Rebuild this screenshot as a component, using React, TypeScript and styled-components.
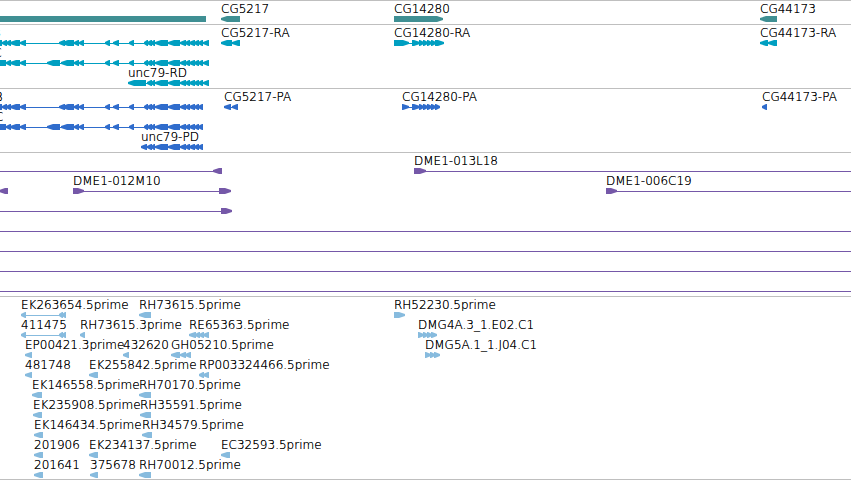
import React from "react";
import styled, { createGlobalStyle } from "styled-components";

const GlobalStyle = createGlobalStyle`
  body {
    margin: 0;
    background: #ffffff;
    color: #000000;
    font-family: "DejaVu Sans", sans-serif;
    font-size: 12px;
    font-weight: 200;
    line-height: 17px;
    overflow-x: hidden;
  }
`;

const Browser = styled.main`
  display: flex;
  flex-direction: column;
  overflow: hidden;
  border-bottom: 1px solid #bfbfbf;
`;

const Track = styled.section<{ $color: string }>`
  display: flex;
  flex-direction: column;
  padding-bottom: 3px;
  border-top: 1px solid #bfbfbf;
  color: ${(p) => p.$color};

  &:last-child {
    padding-bottom: 2px;
  }
`;

const Lane = styled.div`
  position: relative;
  display: flex;
  align-items: flex-end;
  height: 20px;
`;

const Glyphs = styled.svg`
  display: block;
  flex: 1;
  min-width: 0;
  height: 5px;
  overflow: visible;
  fill: currentColor;
`;

const Label = styled.span<{ $start: number }>`
  position: absolute;
  top: 0;
  left: ${(p) => p.$start}px;
  color: #000000;
  text-shadow: 0 0 0 #000000;
  white-space: nowrap;
`;

type Dir = "left" | "right" | "none";
type Span = [start: number, end: number | "edge"];

interface Feature {
  label?: string;
  at?: number;
  dir?: Dir;
  exons?: [number, number][];
  line?: Span;
}

interface TrackData {
  name: string;
  color: string;
  lanes: Feature[][];
}

function exonPath([a, b]: [number, number], dir: Dir): string {
  if (dir === "none") return `M${a} 0H${b}V6H${a}Z`;
  const head = Math.min(6, b - a - 1);
  const tip = dir === "left" ? a : b;
  const tail = dir === "left" ? b : a;
  const full = dir === "left" ? tip + head : tip - head;
  return `M${tip} 2L${full} 0H${tail}V6H${full}L${tip} 4Z`;
}

function Drawing({ feature }: { feature: Feature }) {
  const { line, exons = [], dir = "left" } = feature;
  return (
    <g>
      {line && (
        <line
          x1={line[0]}
          x2={line[1] === "edge" ? "100%" : line[1]}
          y1={3.5}
          y2={3.5}
          stroke="currentColor"
        />
      )}
      {exons.map((e) => (
        <path key={e[0]} d={exonPath(e, dir)} />
      ))}
    </g>
  );
}

const midExons: [number, number][] = [
  [74, 79], [79, 84], [105, 110], [113, 119], [129, 134],
];
const tailExons: [number, number][] = [
  [155, 168], [168, 180], [180, 186], [185, 190], [189, 195], [194, 199], [198, 203],
];
const clusterExons: [number, number][] = [[144, 148], [147, 152], [151, 155]];
const formB: [number, number][] = [
  [-6, 2], [2, 7], [6, 11], [10, 20], [20, 26], [59, 65], [62, 74],
  ...midExons, ...clusterExons, ...tailExons,
];
const formC: [number, number][] = [
  [-8, 6], [6, 11], [10, 20], [20, 26], [47, 60], [61, 74],
  ...midExons, ...clusterExons, ...tailExons,
];

const utr: [number, number] = [203, 209];

const single = (label: string, at: number, end: number, dir: Dir = "left"): Feature => ({
  label, at, dir, exons: [[at, end]],
});

const backbone: Feature = { line: [0, "edge"] };

const tracks: TrackData[] = [
  {
    name: "Genes",
    color: "#3f8f93",
    lanes: [
      [
        { dir: "none", exons: [[-4, 206]] },
        single("CG5217", 221, 240),
        single("CG14280", 394, 443, "right"),
        single("CG44173", 760, 777),
      ],
    ],
  },
  {
    name: "Transcripts",
    color: "#009fc1",
    lanes: [
      [
        { label: "unc79-RB", at: -57, exons: [...formB, utr], line: [0, 209] },
        { label: "CG5217-RA", at: 221, exons: [[221, 232], [232, 240]], line: [221, 240] },
        {
          label: "CG14280-RA", at: 394, dir: "right", line: [394, 444],
          exons: [[394, 409], [412, 420], [419, 424], [423, 428], [427, 432], [431, 436], [435, 444]],
        },
        { label: "CG44173-RA", at: 760, exons: [[760, 768], [768, 777]] },
      ],
      [{ label: "unc79-RC", at: -56, exons: [...formC, utr], line: [0, 209] }],
      [{ label: "unc79-RD", at: 128, exons: [[128, 146], ...clusterExons.slice(1), ...tailExons, utr], line: [128, 209] }],
    ],
  },
  {
    name: "Proteins",
    color: "#2f6ccc",
    lanes: [
      [
        { label: "unc79-PB", at: -54, exons: formB, line: [0, 203] },
        { label: "CG5217-PA", at: 224, exons: [[224, 231], [232, 238]], line: [224, 238] },
        {
          label: "CG14280-PA", at: 402, dir: "right", line: [402, 440],
          exons: [[402, 409], [412, 420], [419, 424], [423, 428], [427, 432], [431, 436], [435, 440]],
        },
        single("CG44173-PA", 762, 767),
      ],
      [{ label: "unc79-PC", at: -54, exons: formC, line: [0, 203] }],
      [{ label: "unc79-PD", at: 141, exons: [[141, 147], ...clusterExons.slice(1), ...tailExons], line: [141, 203] }],
    ],
  },
  {
    name: "Clones",
    color: "#7558a8",
    lanes: [
      [
        { exons: [[213, 222]], line: [0, 215] },
        { label: "DME1-013L18", at: 414, dir: "right", exons: [[414, 426]], line: [414, "edge"] },
      ],
      [
        { exons: [[-1, 8]] },
        { label: "DME1-012M10", at: 73, dir: "right", exons: [[73, 84], [219, 231]], line: [73, 231] },
        { label: "DME1-006C19", at: 606, dir: "right", exons: [[606, 617]], line: [606, "edge"] },
      ],
      [{ dir: "right", exons: [[221, 232]], line: [0, 232] }],
      [backbone],
      [backbone],
      [backbone],
      [backbone],
    ],
  },
  {
    name: "Aligned sequences",
    color: "#87bbde",
    lanes: [
      [
        { label: "EK263654.5prime", at: 21, exons: [[21, 26], [59, 63], [62, 66]], line: [21, 66] },
        single("RH73615.5prime", 139, 151),
        single("RH52230.5prime", 394, 405, "right"),
      ],
      [
        { label: "411475", at: 21, exons: [[21, 26], [59, 63], [62, 66]], line: [21, 66] },
        single("RH73615.3prime", 80, 85),
        { label: "RE65363.5prime", at: 189, exons: [[189, 196], [195, 200], [199, 204], [203, 209]] },
        { label: "DMG4A.3_1.E02.C1", at: 418, dir: "right", exons: [[418, 424], [423, 428], [427, 432], [431, 437]] },
      ],
      [
        single("EP00421.3prime", 25, 32),
        single("432620", 123, 129),
        { label: "GH05210.5prime", at: 171, exons: [[171, 180], [180, 186], [185, 191]] },
        { label: "DMG5A.1_1.J04.C1", at: 425, dir: "right", exons: [[425, 431], [430, 435], [434, 440]] },
      ],
      [
        single("481748", 25, 32),
        single("EK255842.5prime", 89, 98),
        { label: "RP003324466.5prime", at: 199, exons: [[199, 204], [203, 209]] },
      ],
      [single("EK146558.5prime", 32, 42), single("RH70170.5prime", 139, 151)],
      [single("EK235908.5prime", 33, 42), single("RH35591.5prime", 140, 151)],
      [single("EK146434.5prime", 34, 43), single("RH34579.5prime", 142, 152)],
      [
        single("201906", 34, 43),
        single("EK234137.5prime", 89, 98),
        single("EC32593.5prime", 221, 230),
      ],
      [
        single("201641", 34, 43),
        single("375678", 90, 98),
        single("RH70012.5prime", 139, 151),
      ],
    ],
  },
];

export default function App() {
  return (
    <>
      <GlobalStyle />
      <Browser>
        {tracks.map((track) => (
          <Track key={track.name} $color={track.color} aria-label={track.name}>
            {track.lanes.map((lane, i) => (
              <Lane key={i}>
                <Glyphs aria-hidden="true">
                  {lane.map((f, j) => (
                    <Drawing key={j} feature={f} />
                  ))}
                </Glyphs>
                {lane.map(
                  (f) =>
                    f.label && (
                      <Label key={f.label} $start={f.at ?? 0}>
                        {f.label}
                      </Label>
                    )
                )}
              </Lane>
            ))}
          </Track>
        ))}
      </Browser>
    </>
  );
}
